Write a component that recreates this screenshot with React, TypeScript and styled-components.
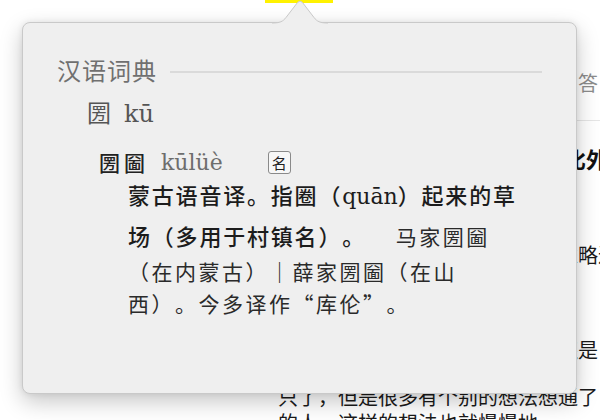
import React from "react";
import styled, { createGlobalStyle } from "styled-components";

const GlobalStyle = createGlobalStyle`
  html, body {
    margin: 0;
    padding: 0;
    background: #ffffff;
    overflow: hidden;
  }
  body {
    width: 600px;
    height: 420px;
    font-family: "Noto Sans CJK SC", "Noto Sans", sans-serif;
    text-spacing-trim: space-all;
  }
  #root {
    position: relative;
    width: 600px;
    height: 420px;
    overflow: hidden;
  }
`;

/* ---------- page behind the popover ---------- */

const Page = styled.div`
  width: 600px;
  height: 420px;
  overflow: hidden;
  color: #1a1a1a;
`;

const Highlight = styled.div`
  margin-left: 265px;
  width: 68px;
  height: 3px;
  background: #fff200;
`;

const Article = styled.div`
  margin-left: 278px;
  width: 400px;
  font-size: 20px;
  white-space: nowrap;
`;

const Tabs = styled.div`
  margin-top: 60px;
  height: 57px;
  line-height: 40px;
  color: #8c8c8c;
  border-bottom: 1px solid #e6e6e6;
`;

const Title = styled.div`
  margin-top: 22px;
  line-height: 30px;
  font-size: 22px;
  font-weight: 700;
  color: #111;
`;

const Para = styled.p<{ $gap: number }>`
  margin: ${(p) => p.$gap}px 0 0;
  line-height: 26px;
`;

/* ---------- dictionary popover ---------- */

const Popover = styled.div`
  position: absolute;
  left: 22px;
  top: 22px;
  width: 555px;
  height: 372px;
  box-sizing: border-box;
  padding: 11px 34px 0 34px;
  background: #efefef;
  border: 1px solid #c9c9c9;
  border-radius: 8px;
  box-shadow: 0 8px 22px rgba(0, 0, 0, 0.22), 0 0 6px rgba(0, 0, 0, 0.08);
`;

const Arrow = styled.svg`
  position: absolute;
  left: 249px;
  top: -23px;
  overflow: visible;
`;

const Header = styled.div`
  display: flex;
  align-items: center;
  gap: 13px;
  height: 30px;
  margin-top: 21px;
`;

const Source = styled.span`
  font-size: 24px;
  letter-spacing: 1px;
  color: #707070;
  line-height: 30px;
`;

const Rule = styled.div`
  flex: 1;
  height: 2px;
  margin-top: 3px;
  background: #dadada;
`;

const Headword = styled.div`
  display: flex;
  align-items: baseline;
  gap: 13px;
  margin: 10px 0 0 30px;
  line-height: 34px;
  color: #555;
`;

const HeadChar = styled.span`
  font-size: 24px;
`;

const Pinyin = styled.span<{ $size: number; $tone: string }>`
  font-family: "DejaVu Serif", "Liberation Serif", serif;
  font-size: ${(p) => p.$size}px;
  color: ${(p) => p.$tone};
`;

const Entry = styled.div`
  display: flex;
  align-items: center;
  margin: 16px 0 0 42px;
  height: 30px;
`;

const EntryWord = styled.span`
  font-size: 21px;
  letter-spacing: 4px;
  color: #222;
  font-weight: 500;
`;

const PinyinGap = styled.span`
  margin-left: 12px;
`;

const Tag = styled.span`
  display: inline-flex;
  align-items: center;
  justify-content: center;
  width: 21px;
  height: 21px;
  margin-left: 45px;
  border: 1px solid #8a8a8a;
  border-radius: 3px;
  background: #f7f7f7;
  font-size: 15px;
  color: #222;
`;

const Definition = styled.div`
  margin: -2px 0 0 71px;
  white-space: nowrap;
`;

const MainLine = styled.div`
  line-height: 38px;
  font-size: 22px;
  letter-spacing: 1.8px;
  font-weight: 500;
  color: #1c1c1c;
`;

const Example = styled.span<{ $lead?: number }>`
  margin-left: ${(p) => p.$lead ?? 0}px;
  font-size: 21px;
  letter-spacing: 2.5px;
  font-weight: 400;
  color: #2a2a2a;
`;

const ExampleLine = styled.div`
  line-height: 32px;
`;

const InlinePinyin = styled.span`
  font-family: "DejaVu Serif", "Liberation Serif", serif;
  font-size: 22px;
  letter-spacing: 0;
  font-weight: 400;
`;

export default function App() {
  return (
    <>
      <GlobalStyle />
      <Page>
        <Highlight />
        <Article>
          <Tabs>问题　　　　　　　　　　全部回答</Tabs>
          <Title>关于这个问题我觉得可以类似比外国</Title>
          <Para $gap={69}>其实这个问题我之前也有认真考虑略过</Para>
          <Para $gap={69}>不过从长远来看这个方向我觉得还是</Para>
          <Para $gap={21}>只了，但是很多有个别的想法想通了，</Para>
          <Para $gap={0}>的人，这样的想法也就慢慢地</Para>
        </Article>
      </Page>

      <Popover>
        <Arrow width="56" height="24" viewBox="0 0 56 24">
          <path
            d="M0 23 C8 23 11 21.5 14 17.5 L25.5 2.5 Q28 -0.5 30.5 2.5 L42 17.5 C45 21.5 48 23 56 23 L56 25 L0 25 Z"
            fill="#efefef"
          />
          <path
            d="M0 23 C8 23 11 21.5 14 17.5 L25.5 2.5 Q28 -0.5 30.5 2.5 L42 17.5 C45 21.5 48 23 56 23"
            fill="none"
            stroke="#c9c9c9"
            strokeWidth="1"
          />
        </Arrow>

        <Header>
          <Source>汉语词典</Source>
          <Rule />
        </Header>

        <Headword>
          <HeadChar>圐</HeadChar>
          <Pinyin $size={24} $tone="#555">kū</Pinyin>
        </Headword>

        <Entry>
          <EntryWord>圐圙</EntryWord>
          <PinyinGap>
            <Pinyin $size={22} $tone="#6d6d6d">kūlüè</Pinyin>
          </PinyinGap>
          <Tag>名</Tag>
        </Entry>

        <Definition>
          <MainLine>
            蒙古语音译。指圈（<InlinePinyin>quān</InlinePinyin>）起来的草
          </MainLine>
          <MainLine>
            场（多用于村镇名）。　<Example $lead={6}>马家圐圙</Example>
          </MainLine>
          <Example>
            <ExampleLine>（在内蒙古）｜薛家圐圙（在山</ExampleLine>
            <ExampleLine>西）。今多译作“库伦”。</ExampleLine>
          </Example>
        </Definition>
      </Popover>
    </>
  );
}
